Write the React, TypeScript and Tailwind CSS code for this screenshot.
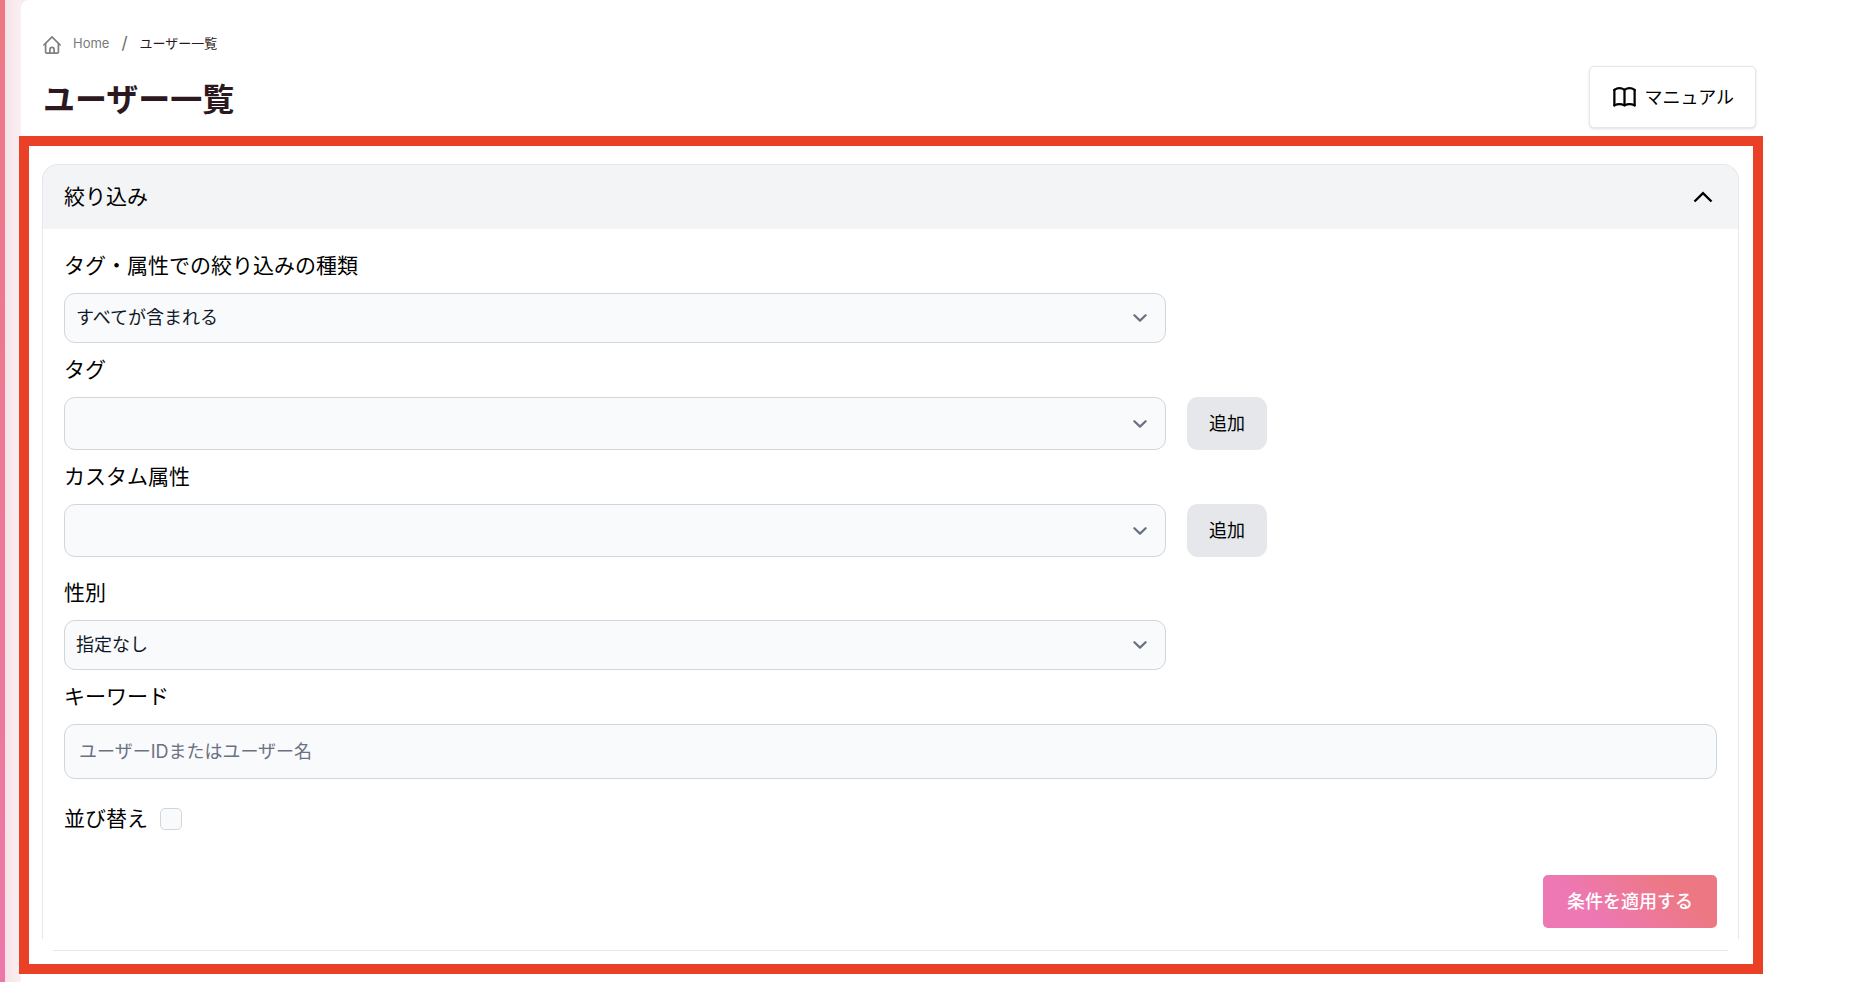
import { useState } from 'react';
import type { ReactNode } from 'react';

const controlClass =
  'w-full appearance-none rounded-[11px] border border-gray-300 bg-gray-50 text-[18px] leading-6 text-gray-900';

function HomeIcon() {
  return (
    <svg className="mt-1 h-[18px] w-[18px]" viewBox="0 0 18 18" fill="none" stroke="#7f7f7f" strokeWidth="1.7" strokeLinecap="round" strokeLinejoin="round" aria-hidden="true">
      <path d="M.9 9 9 .9 17.1 9" />
      <path d="M2.6 7.4v8.7a1 1 0 0 0 1 1h10.8a1 1 0 0 0 1-1V7.4" />
      <path d="M6.9 17v-3.6a2.1 2.1 0 0 1 4.2 0V17" />
    </svg>
  );
}

function BookIcon() {
  return (
    <svg className="h-[27px] w-[27px]" viewBox="0 0 24 24" fill="none" stroke="currentColor" strokeWidth="2" strokeLinecap="round" strokeLinejoin="round" aria-hidden="true">
      <path d="M3 19q4.5-2.4 9 0 4.5-2.4 9 0" />
      <path d="M3 5.2q4.5-3 9 0 4.5-3 9 0" />
      <path d="M3 5.2V19M12 5.2V19M21 5.2V19" />
    </svg>
  );
}

function Label({ htmlFor, children }: { htmlFor: string; children: ReactNode }) {
  return (
    <label htmlFor={htmlFor} className="mb-[11px] block text-[21px] leading-8">
      {children}
    </label>
  );
}

function SelectField({ id, label, options, addable }: { id: string; label: string; options: string[]; addable?: boolean }) {
  return (
    <div>
      <Label htmlFor={id}>{label}</Label>
      <div className="flex gap-[21px]">
        <div className="relative w-2/3">
          <select id={id} className={`${controlClass} block px-[11px] ${addable ? 'h-[53px]' : 'h-[50px]'}`}>
            {options.map((option) => (
              <option key={option}>{option}</option>
            ))}
          </select>
          <svg
            className="pointer-events-none absolute inset-y-0 right-[19px] my-auto h-[14px] w-[14px] text-gray-500"
            viewBox="0 0 14 14"
            fill="none"
            stroke="currentColor"
            strokeWidth="2.2"
            strokeLinecap="round"
            strokeLinejoin="round"
            aria-hidden="true"
          >
            <path d="M1.4 4.2 7 9.6l5.6-5.4" />
          </svg>
        </div>
        {addable && (
          <button type="button" className="h-[53px] w-20 rounded-[11px] bg-gray-200 text-[18px]">
            追加
          </button>
        )}
      </div>
    </div>
  );
}

function FilterPanel() {
  const [open, setOpen] = useState(true);

  return (
    <section>
      <button
        type="button"
        aria-expanded={open}
        onClick={() => setOpen(!open)}
        className="flex h-[65px] w-full items-center justify-between rounded-t-2xl border border-b-0 border-gray-200 bg-gray-100 pr-6 pl-[21px] text-[21px]"
      >
        絞り込み
        <svg className="h-[22px] w-[22px]" viewBox="0 0 22 22" fill="none" stroke="currentColor" strokeWidth="2.4" aria-hidden="true">
          <path d="m2.5 15.5 8.5-8.3 8.5 8.3" />
        </svg>
      </button>
      {open && (
        <>
          <form className="border-x border-gray-200 px-[21px] pt-[21px] pb-[11px]" onSubmit={(e) => e.preventDefault()}>
            <div className="flex flex-col gap-[11px]">
              <SelectField id="match" label="タグ・属性での絞り込みの種類" options={['すべてが含まれる']} />
              <SelectField id="tag" label="タグ" options={['']} addable />
              <SelectField id="attribute" label="カスタム属性" options={['']} addable />
              <div className="pt-[9px]">
                <SelectField id="gender" label="性別" options={['指定なし']} />
              </div>
              <div>
                <Label htmlFor="keyword">キーワード</Label>
                <input
                  id="keyword"
                  type="text"
                  placeholder="ユーザーIDまたはユーザー名"
                  className={`${controlClass} block h-[55px] px-[14px] placeholder:text-gray-500`}
                />
              </div>
            </div>
            <div className="mt-6 flex items-center gap-3">
              <label htmlFor="sort" className="text-[21px] leading-8">
                並び替え
              </label>
              <input id="sort" type="checkbox" className="h-[22px] w-[22px] appearance-none rounded-[5px] border border-gray-300 bg-gray-50 checked:bg-pink-400" />
            </div>
            <div className="mt-10 flex justify-end">
              <button type="submit" className="h-[53px] rounded-[5px] bg-[linear-gradient(45deg,#ed78b4_27%,#ed7884_75%)] px-6 text-[18px] font-medium text-white">
                条件を適用する
              </button>
            </div>
          </form>
          <div className="mx-[11px] h-3 border-b border-gray-200" />
        </>
      )}
    </section>
  );
}

export default function App() {
  return (
    <div className="flex min-h-screen bg-[#fbe9ee] font-[Inter,'Noto_Sans_CJK_JP',sans-serif] text-black">
      <div className="w-[5px] shrink-0 bg-linear-to-b from-[#ed7884] to-[#ed78a8]" />
      <div className="w-4 shrink-0 bg-linear-to-r from-[#f5e2e7] to-[#faf0f3]" />
      <main className="min-w-0 flex-1 rounded-tl-lg bg-white pr-[86px]">
        <header className="flex h-[136px] items-end justify-between pr-[7px] pb-2 pl-[22px]">
          <div>
            <nav aria-label="breadcrumb" className="flex items-center gap-3 text-[13px] leading-6">
              <HomeIcon />
              <a href="#home" className="text-[#7a7a7a]">
                Home
              </a>
              <span className="text-[17px] text-[#6b6b6b]">/</span>
              <span className="text-[#2c1920]">ユーザー一覧</span>
            </nav>
            <h1 className="mt-[25px] mb-2 text-[32px] leading-10 font-bold text-[#2c1920]">ユーザー一覧</h1>
          </div>
          <button type="button" className="flex h-[62px] items-center gap-[7px] rounded-[5px] border border-gray-200 bg-white px-[21px] text-[18px] shadow">
            <BookIcon />
            マニュアル
          </button>
        </header>
        <div className="-ml-0.5 border-10 border-[#ea4025] pt-[18px] pr-[14px] pb-[13px] pl-[13px]">
          <FilterPanel />
        </div>
      </main>
    </div>
  );
}
